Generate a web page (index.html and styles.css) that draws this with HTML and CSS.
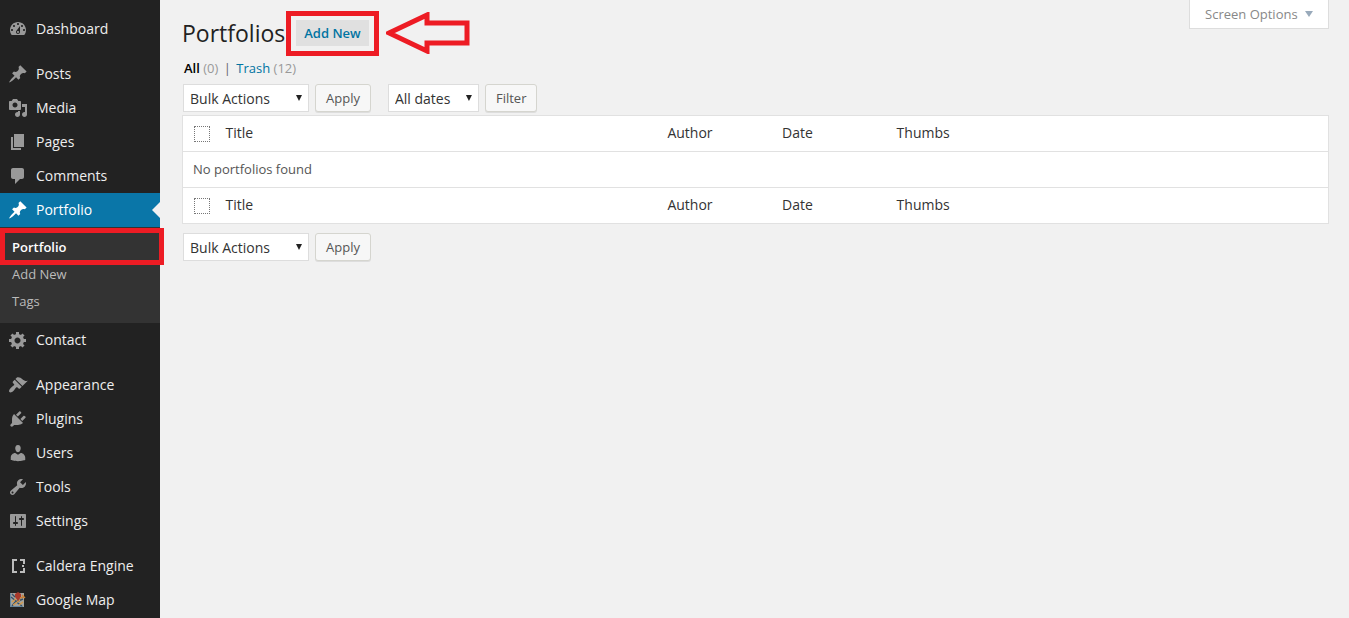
FILE: index.html
```html
<!DOCTYPE html>
<html lang="en">
<head>
    <meta charset="UTF-8">
    <meta name="viewport" content="width=device-width, initial-scale=1.0">
    <title>Portfolios</title>
    <link rel="stylesheet" href="styles.css">
</head>
<body>
    <nav class="admin-menu">
        <ul class="menu-group">
            <li><a href="#" class="menu-item">
                <svg class="icon" viewBox="0 0 20 20"><path d="M3.76 16h12.48c1.1-1.37 1.76-3.11 1.76-5 0-4.42-3.58-8-8-8s-8 3.58-8 8c0 1.89.66 3.63 1.76 5zM10 4c.55 0 1 .45 1 1s-.45 1-1 1-1-.45-1-1 .45-1 1-1zM6 6c.55 0 1 .45 1 1s-.45 1-1 1-1-.45-1-1 .45-1 1-1zm8 0c.55 0 1 .45 1 1s-.45 1-1 1-1-.45-1-1 .45-1 1-1zm-5.37 5.55L12 7v6c0 1.1-.9 2-2 2s-2-.9-2-2c0-.57.24-1.08.63-1.45zM4 10c.55 0 1 .45 1 1s-.45 1-1 1-1-.45-1-1 .45-1 1-1zm12 0c.55 0 1 .45 1 1s-.45 1-1 1-1-.45-1-1 .45-1 1-1zm-5 3c0-.55-.45-1-1-1s-1 .45-1 1 .45 1 1 1 1-.45 1-1z"/></svg>
                Dashboard</a></li>
        </ul>
        <ul class="menu-group">
            <li><a href="#" class="menu-item">
                <svg class="icon" viewBox="0 0 20 20"><path d="M10.44 3.02l1.82-1.82 6.36 6.35-1.83 1.82c-1.05-.68-2.48-.57-3.41.36l-.75.75c-.92.93-1.04 2.35-.35 3.41l-1.83 1.82-2.41-2.41-2.8 2.79c-.42.42-3.38 2.71-3.8 2.29s1.86-3.39 2.28-3.81l2.79-2.79L4.1 9.36l1.83-1.82c1.05.69 2.48.57 3.4-.36l.75-.75c.93-.92 1.05-2.35.36-3.41z"/></svg>
                Posts</a></li>
            <li><a href="#" class="menu-item">
                <svg class="icon" viewBox="0 0 20 20"><path d="M13 11V4c0-.55-.45-1-1-1h-1.67L9 1H5L3.67 3H2c-.55 0-1 .45-1 1v7c0 .55.45 1 1 1h10c.55 0 1-.45 1-1zM7 4.5c1.38 0 2.5 1.12 2.5 2.5S8.38 9.5 7 9.5 4.5 8.38 4.5 7 5.62 4.5 7 4.5zM14 6h5v10.5c0 1.38-1.12 2.5-2.5 2.5S14 17.88 14 16.5s1.12-2.5 2.5-2.5c.17 0 .34.02.5.05V9h-3V6zm-4 8.05V13h2v3.5c0 1.38-1.12 2.5-2.5 2.5S7 17.88 7 16.5 8.12 14 9.5 14c.17 0 .34.02.5.05z"/></svg>
                Media</a></li>
            <li><a href="#" class="menu-item">
                <svg class="icon" viewBox="0 0 20 20"><path d="M6 15V2h10v13H6zm-1 1h8v2H3V5h2v11z"/></svg>
                Pages</a></li>
            <li><a href="#" class="menu-item">
                <svg class="icon" viewBox="0 0 20 20"><path d="M5 2h9c1.1 0 2 .9 2 2v7c0 1.1-.9 2-2 2h-2l-5 5v-5H5c-1.1 0-2-.9-2-2V4c0-1.1.9-2 2-2z"/></svg>
                Comments</a></li>
            <li><a href="#" class="menu-item current">
                <svg class="icon" viewBox="0 0 20 20"><path d="M10.44 3.02l1.82-1.82 6.36 6.35-1.83 1.82c-1.05-.68-2.48-.57-3.41.36l-.75.75c-.92.93-1.04 2.35-.35 3.41l-1.83 1.82-2.41-2.41-2.8 2.79c-.42.42-3.38 2.71-3.8 2.29s1.86-3.39 2.28-3.81l2.79-2.79L4.1 9.36l1.83-1.82c1.05.69 2.48.57 3.4-.36l.75-.75c.93-.92 1.05-2.35.36-3.41z"/></svg>
                Portfolio</a>
                <ul class="submenu">
                    <li class="highlight highlight-menu"><a href="#" class="active">Portfolio</a></li>
                    <li><a href="#">Add New</a></li>
                    <li><a href="#">Tags</a></li>
                </ul>
            </li>
            <li><a href="#" class="menu-item">
                <svg class="icon" viewBox="0 0 20 20"><path d="M18 12h-2.18c-.17.7-.44 1.35-.81 1.93l1.54 1.54-2.1 2.1-1.54-1.54c-.58.36-1.23.63-1.91.79V19H8v-2.18c-.68-.16-1.33-.43-1.91-.79l-1.54 1.54-2.12-2.12 1.54-1.54c-.36-.58-.63-1.23-.79-1.91H1V9.03h2.17c.16-.7.44-1.35.8-1.94L2.43 5.55l2.1-2.1 1.54 1.54c.58-.37 1.24-.64 1.93-.81V2h3v2.18c.68.16 1.33.43 1.91.79l1.54-1.54 2.12 2.12-1.54 1.54c.36.59.64 1.24.8 1.94H18V12zm-8.5 1.5c1.66 0 3-1.34 3-3s-1.34-3-3-3-3 1.34-3 3 1.34 3 3 3z"/></svg>
                Contact</a></li>
        </ul>
        <ul class="menu-group">
            <li><a href="#" class="menu-item">
                <svg class="icon" viewBox="0 0 20 20"><path d="M14.48 11.06L7.41 3.99l1.5-1.5c.5-.56 2.3-.47 3.51.32 1.21.8 1.43 1.28 2.91 2.1 1.18.64 2.45 1.26 4.45.85zm-.71.71L6.7 4.7 4.93 6.47c-.39.39-.39 1.02 0 1.41l1.06 1.06c.39.39.39 1.03 0 1.42-.6.6-1.43 1.11-2.21 1.69-.35.26-.7.53-1.01.84C1.43 14.23.4 16.08 1.4 17.07c.99 1 2.84-.03 4.18-1.36.31-.31.58-.66.85-1.02.57-.78 1.08-1.61 1.69-2.21.39-.39 1.02-.39 1.41 0l1.06 1.06c.39.39 1.02.39 1.41 0z"/></svg>
                Appearance</a></li>
            <li><a href="#" class="menu-item">
                <svg class="icon" viewBox="0 0 20 20"><path d="M13.11 4.36L9.87 7.6 8 5.73l3.24-3.24c.35-.34 1.05-.2 1.56.32.52.51.66 1.21.31 1.55zm-8 1.77l.91-1.12 9.01 9.01-1.19.84c-.71.71-2.63 1.16-3.82 1.16H6.14L4.9 17.26c-.59.59-1.54.59-2.12 0-.59-.58-.59-1.53 0-2.12l1.24-1.24v-3.88c0-1.13.4-3.19 1.09-3.89zm7.26 3.97l3.24-3.24c.34-.35 1.04-.21 1.55.31.52.51.66 1.21.31 1.55l-3.24 3.25z"/></svg>
                Plugins</a></li>
            <li><a href="#" class="menu-item">
                <svg class="icon" viewBox="0 0 20 20"><path d="M10 9.25c-2.27 0-2.73-3.44-2.73-3.44C7 4.02 7.82 2 9.97 2c2.16 0 2.98 2.02 2.71 3.81 0 0-.41 3.44-2.68 3.44zm0 2.57L12.72 10c2.39 0 4.52 2.33 4.52 4.53v2.49s-3.65 1.13-7.24 1.13c-3.65 0-7.24-1.13-7.24-1.13v-2.49c0-2.25 1.94-4.48 4.47-4.48z"/></svg>
                Users</a></li>
            <li><a href="#" class="menu-item">
                <svg class="icon" viewBox="0 0 20 20"><path d="M16.68 9.77c-1.34 1.34-3.3 1.67-4.95.99l-5.41 6.52c-.99.99-2.59.99-3.58 0s-.99-2.59 0-3.57l6.52-5.42c-.68-1.65-.35-3.61.99-4.95 1.28-1.28 3.12-1.62 4.72-1.06l-2.89 2.89 2.82 2.82 2.86-2.87c.53 1.58.18 3.39-1.08 4.65zM3.81 16.21c.4.39 1.04.39 1.43 0 .4-.4.4-1.04 0-1.43-.39-.4-1.03-.4-1.43 0-.39.39-.39 1.03 0 1.43z"/></svg>
                Tools</a></li>
            <li><a href="#" class="menu-item">
                <svg class="icon" viewBox="0 0 20 20"><path d="M18 16V4c0-.55-.45-1-1-1H3c-.55 0-1 .45-1 1v12c0 .55.45 1 1 1h14c.55 0 1-.45 1-1zM8 11h1c.55 0 1 .45 1 1s-.45 1-1 1H8v1.5c0 .28-.22.5-.5.5s-.5-.22-.5-.5V13H6c-.55 0-1-.45-1-1s.45-1 1-1h1V5.5c0-.28.22-.5.5-.5s.5.22.5.5V11zm5-2h-1c-.55 0-1-.45-1-1s.45-1 1-1h1V5.5c0-.28.22-.5.5-.5s.5.22.5.5V7h1c.55 0 1 .45 1 1s-.45 1-1 1h-1v5.5c0 .28-.22.5-.5.5s-.5-.22-.5-.5V9z"/></svg>
                Settings</a></li>
        </ul>
        <ul class="menu-group">
            <li><a href="#" class="menu-item">
                <svg class="icon" viewBox="0 0 20 20"><path fill="#bbb" d="M4 3h5v2H6v10h3v2H4zM12 3h5v5h-2V5h-3zM14 9h2v2h-2zM15 12h2v5h-5v-2h3z"/></svg>
                Caldera Engine</a></li>
            <li><a href="#" class="menu-item">
                <svg class="icon" viewBox="0 0 20 20">
                    <path fill="#a5a39d" d="M2 3h14v14H2z"/>
                    <path fill="none" stroke="#33506b" stroke-width="1.4" d="M3 7l5 4-4 5M7 11l7 5M8 12l7-3M4 4l3 3"/>
                    <path fill="none" stroke="#d99a45" stroke-width="1.2" d="M4 12l4-3M5 15l7-5M11 15l4-3"/>
                    <path fill="none" stroke="#2a6a9c" d="M2.500 3.500v13h12" stroke-dasharray="1 1"/>
                    <path fill="#a83a2c" d="M7 4l3-2 3 2v3l-3 4-3-4z"/>
                    <path fill="none" stroke="#c98238" stroke-width="1.4" d="M12 8l4-1M14 5l3 3"/>
                </svg>
                Google Map</a></li>
        </ul>
    </nav>

    <main class="content">
        <button type="button" class="screen-options">Screen Options <span class="arrow"></span></button>

        <div class="page-head">
            <h1>Portfolios</h1>
            <div class="highlight highlight-add">
                <a href="#" class="add-new">Add New</a>
            </div>
            <svg class="pointer" viewBox="0 0 84 42"><path d="M3 21L41 3v8h40v20H41v8z"/></svg>
        </div>

        <div class="filters">
            <a href="#" class="all">All</a> <span class="count">(0)</span>
            <span class="separator">|</span>
            <a href="#">Trash</a> <span class="count">(12)</span>
        </div>

        <div class="tablenav">
            <div class="select bulk">
                <select aria-label="Bulk actions">
                    <option>Bulk Actions</option>
                </select>
            </div>
            <button type="button" class="button">Apply</button>
            <div class="select dates">
                <select aria-label="Filter by date">
                    <option>All dates</option>
                </select>
            </div>
            <button type="button" class="button">Filter</button>
        </div>

        <table class="list-table">
            <thead>
                <tr>
                    <th class="check"><input type="checkbox" aria-label="Select all"></th>
                    <th>Title</th>
                    <th class="narrow">Author</th>
                    <th class="narrow">Date</th>
                    <th>Thumbs</th>
                </tr>
            </thead>
            <tbody>
                <tr>
                    <td colspan="5">No portfolios found</td>
                </tr>
            </tbody>
            <tfoot>
                <tr>
                    <th class="check"><input type="checkbox" aria-label="Select all"></th>
                    <th>Title</th>
                    <th>Author</th>
                    <th>Date</th>
                    <th>Thumbs</th>
                </tr>
            </tfoot>
        </table>

        <div class="tablenav bottom">
            <div class="select bulk">
                <select aria-label="Bulk actions">
                    <option>Bulk Actions</option>
                </select>
            </div>
            <button type="button" class="button">Apply</button>
        </div>
    </main>
</body>
</html>
```
FILE: styles.css
```css
* {
    box-sizing: border-box;
}

body {
    display: flex;
    min-height: 100vh;
    margin: 0;
    font-family: "Open Sans", sans-serif;
    font-size: 13px;
    line-height: 20px;
    color: #555;
    background-color: #f1f1f1;
}

a {
    color: #0074a2;
    text-decoration: none;
}

ul {
    list-style: none;
    margin: 0;
    padding: 0;
}

.admin-menu {
    flex: none;
    width: 160px;
    padding-top: 12px;
    background-color: #222;
}

.menu-group {
    margin-bottom: 11px;
}

.menu-group:last-child {
    margin-bottom: 0;
}

.menu-item {
    display: flex;
    align-items: center;
    gap: 8px;
    height: 34px;
    padding-left: 8px;
    font-size: 14px;
    color: #eee;
}

.icon {
    width: 20px;
    height: 20px;
    fill: #999;
}

.menu-item.current {
    position: relative;
    color: #fff;
    background-color: #0a76a8;
}

.menu-item.current .icon {
    fill: #fff;
}

.menu-item.current::after {
    content: "";
    position: absolute;
    right: 0;
    top: 9px;
    border: 8px solid transparent;
    border-left: 0;
    border-right-color: #f1f1f1;
}

.submenu {
    padding: 7px 0 8px;
    background-color: #333;
}

.submenu a {
    display: block;
    padding: 3px 12px 4px;
    color: #bbb;
}

.submenu a.active {
    font-weight: 600;
    color: #fff;
}

/* red marker frames */
.highlight {
    position: relative;
}

.highlight::after {
    content: "";
    position: absolute;
    border: 5px solid #ed1c24;
    pointer-events: none;
}

.highlight-menu::after {
    top: -6px;
    right: -4px;
    bottom: -4px;
    left: 0;
}

.highlight-add::after {
    top: -9px;
    right: -10px;
    bottom: -10px;
    left: -10px;
}

.content {
    position: relative;
    flex: 1;
    padding: 16px 20px 20px 22px;
}

.screen-options {
    position: absolute;
    top: 0;
    right: 20px;
    height: 29px;
    padding: 0 15px;
    border: 1px solid #ddd;
    border-top: 0;
    font: inherit;
    color: #888;
    background-color: #fff;
}

.arrow {
    display: inline-block;
    width: 8px;
    height: 6px;
    margin-left: 4px;
    vertical-align: 2px;
    background-color: #9ab;
    clip-path: polygon(0 0, 100% 0, 50% 100%);
}

.page-head {
    display: flex;
    align-items: center;
    height: 34px;
}

h1 {
    margin: 0 11px 0 0;
    font-size: 23px;
    font-weight: 400;
    line-height: 34px;
    color: #222;
}

.add-new {
    display: block;
    padding: 3px 8px;
    font-weight: 600;
    background-color: #e0e0e0;
}

.pointer {
    width: 84px;
    height: 42px;
    margin-left: 17px;
    fill: none;
    stroke: #ed1c24;
    stroke-width: 5;
}

.filters {
    margin: 8px 0 6px;
    padding-left: 2px;
}

.filters .all {
    font-weight: 600;
    color: #000;
}

.count {
    color: #999;
}

.separator {
    margin: 0 2px;
    color: #666;
}

.tablenav {
    display: flex;
    align-items: flex-start;
    gap: 6px;
    padding-left: 1px;
    margin-bottom: 3px;
}

.tablenav.bottom {
    margin-top: 9px;
}

.select {
    position: relative;
}

.select::after {
    content: "";
    position: absolute;
    top: 11px;
    right: 7px;
    width: 6px;
    height: 6px;
    background-color: #222;
    clip-path: polygon(0 0, 100% 0, 50% 100%);
    pointer-events: none;
}

.select select {
    display: block;
    width: 100%;
    height: 28px;
    padding: 1px 6px 0;
    border: 1px solid #ddd;
    font: inherit;
    font-size: 14px;
    color: #333;
    background-color: #fff;
    appearance: none;
}

.bulk {
    width: 126px;
}

.dates {
    width: 91px;
    margin-left: 11px;
}

.button {
    height: 28px;
    padding: 0 10px;
    border: 1px solid #d5d5cf;
    border-radius: 3px;
    font: inherit;
    color: #555;
    background-color: #f7f7f7;
    box-shadow: 0 1px 0 #ddd;
}

.list-table {
    width: 100%;
    table-layout: fixed;
    border: 1px solid #e1e1e1;
    border-collapse: collapse;
    background-color: #fff;
}

.list-table th,
.list-table td {
    height: 36px;
    padding: 0 10px 1px;
    border-bottom: 1px solid #e1e1e1;
    text-align: left;
    vertical-align: middle;
}

.list-table th {
    font-size: 14px;
    font-weight: 400;
    color: #333;
}

.list-table .check {
    width: 33px;
    padding: 0 0 0 11px;
}

.list-table .narrow {
    width: 10%;
}

.list-table input {
    display: block;
    width: 16px;
    height: 16px;
    margin: 0;
    border: 1px dotted #777;
    background-color: #fff;
    appearance: none;
}
```
